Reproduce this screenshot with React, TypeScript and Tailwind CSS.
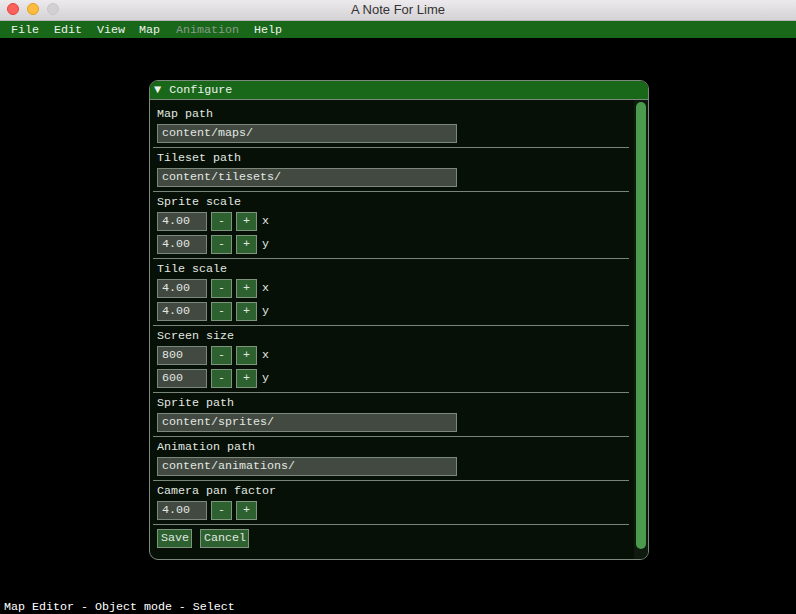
import React from 'react';

const mono = { fontFamily: '"Liberation Mono", "DejaVu Sans Mono", monospace' };

function Label({ children }: { children: React.ReactNode }) {
  return <div className="h-[12px] leading-[12px] text-[#e2e8e2]">{children}</div>;
}

function PathInput({ value }: { value: string }) {
  return (
    <div className="h-[19px] w-[300px] border border-[#7d887d] bg-[#414941] px-[4px] leading-[17px] text-[#e2e8e2]">
      {value}
    </div>
  );
}

function Sep() {
  return <div className="h-px -ml-[4px] w-[476px] shrink-0 bg-[#7a857a]" />;
}

function StepBtn({ children }: { children: React.ReactNode }) {
  return (
    <div className="flex h-[19px] w-[21px] items-center justify-center border border-[#7d947d] bg-[#2d6230] leading-[17px] text-[#e2e8e2]">
      {children}
    </div>
  );
}

function NumRow({ value, axis }: { value: string; axis?: string }) {
  return (
    <div className="flex h-[19px] items-center gap-[4px]">
      <div className="h-[19px] w-[50px] border border-[#7d887d] bg-[#414941] px-[4px] leading-[17px] text-[#e2e8e2]">
        {value}
      </div>
      <StepBtn>-</StepBtn>
      <StepBtn>+</StepBtn>
      {axis && <span className="ml-px leading-[13px] text-[#e2e8e2]">{axis}</span>}
    </div>
  );
}

export default function App() {
  return (
    <div className="flex h-[614px] w-[796px] flex-col overflow-hidden bg-black" style={mono}>
      {/* mac title bar */}
      <div
        className="relative flex h-[21px] shrink-0 items-center justify-center border-b border-[#b8b6b8] bg-gradient-to-b from-[#eceaec] to-[#d4d2d4]"
        style={{ fontFamily: '"Liberation Sans", Arial, sans-serif' }}
      >
        <div className="absolute left-[7px] top-[3px] flex gap-[8px]">
          <span className="h-[12px] w-[12px] rounded-full border border-[#e0443e] bg-[#fc605b]" />
          <span className="h-[12px] w-[12px] rounded-full border border-[#dea123] bg-[#fdbc40]" />
          <span className="h-[12px] w-[12px] rounded-full border border-[#c8c6c8] bg-[#d2d0d2]" />
        </div>
        <span className="text-[13px] text-[#333]">A Note For Lime</span>
      </div>

      {/* menu bar */}
      <div className="flex h-[18px] shrink-0 items-center border-b border-black bg-[#19681a] pl-[11px] pt-[2px] text-[11.67px] leading-[13px] text-[#eef2ee]">
        <span className="mr-[15px]">File</span>
        <span className="mr-[15px]">Edit</span>
        <span className="mr-[14px]">View</span>
        <span className="mr-[16px]">Map</span>
        <span className="mr-[15px] text-[#8a9a8a]">Animation</span>
        <span>Help</span>
      </div>

      {/* canvas */}
      <div className="relative flex-1 text-[11.67px]">
        <div className="ml-[149px] mt-[41px] flex h-[480px] w-[500px] flex-col overflow-hidden rounded-[9px] border border-[#7d887d] bg-[#071007]">
          <div className="flex h-[19px] shrink-0 items-center border-b border-[#7d887d] bg-[#19681a] pl-[4px] pt-[1px] leading-[13px] text-[#eef2ee]">
            <span className="mr-[8px] text-[12px]">▼</span>Configure
          </div>
          <div className="flex flex-1 overflow-hidden">
            <div className="flex flex-1 flex-col gap-[4px] pl-[7px] pt-[8px]">
              <Label>Map path</Label>
              <PathInput value="content/maps/" />
              <Sep />
              <Label>Tileset path</Label>
              <PathInput value="content/tilesets/" />
              <Sep />
              <Label>Sprite scale</Label>
              <NumRow value="4.00" axis="x" />
              <NumRow value="4.00" axis="y" />
              <Sep />
              <Label>Tile scale</Label>
              <NumRow value="4.00" axis="x" />
              <NumRow value="4.00" axis="y" />
              <Sep />
              <Label>Screen size</Label>
              <NumRow value="800" axis="x" />
              <NumRow value="600" axis="y" />
              <Sep />
              <Label>Sprite path</Label>
              <PathInput value="content/sprites/" />
              <Sep />
              <Label>Animation path</Label>
              <PathInput value="content/animations/" />
              <Sep />
              <Label>Camera pan factor</Label>
              <NumRow value="4.00" />
              <Sep />
              <div className="flex gap-[8px]">
                <div className="h-[19px] w-[35px] border border-[#7d947d] bg-[#2d6230] px-[3px] leading-[17px] text-[#e2e8e2]">Save</div>
                <div className="h-[19px] w-[49px] border border-[#7d947d] bg-[#2d6230] px-[3px] leading-[17px] text-[#e2e8e2]">Cancel</div>
              </div>
            </div>
            <div className="flex w-[14px] shrink-0 justify-center bg-[#0e1a0e] pb-[10px] pt-[2px]">
              <div className="h-full w-[10px] rounded-[5px] bg-[#4c9a4e]" />
            </div>
          </div>
        </div>
        <div className="absolute bottom-0 left-[4px] leading-[13px] text-white">
          Map Editor - Object mode - Select
        </div>
      </div>
    </div>
  );
}
